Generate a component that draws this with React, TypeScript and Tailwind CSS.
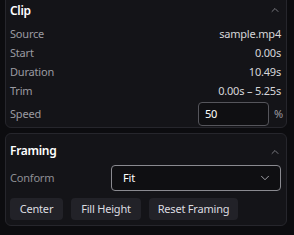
import { ChevronUp, ChevronDown } from "lucide-react";

const ROWS = [
  { label: "Source", value: "sample.mp4" },
  { label: "Start", value: "0.00s" },
  { label: "Duration", value: "10.49s" },
  { label: "Trim", value: "0.00s – 5.25s" },
];

export default function App() {
  return (
    <div
      className="h-[235px] w-[294px] overflow-hidden bg-[#0c0c0f] pl-[5px] pr-[7px] text-[11px] tracking-[-0.2px] text-[#d6d6da]"
      style={{ fontFamily: '"Noto Sans", "Open Sans", sans-serif' }}
    >
      {/* Clip */}
      <section className="mt-[-7px] rounded-md border border-[#26262c] bg-[#141418] pl-[4px] pr-[5px]">
        <div className="flex h-[31px] items-start justify-between pt-[8px]">
          <h2 className="text-[12px] font-semibold tracking-[-0.3px] text-white">Clip</h2>
          <ChevronUp className="mt-[2px] size-[12px] text-[#9a9aa0]" strokeWidth={1.5} />
        </div>
        {ROWS.map((r) => (
          <div key={r.label} className="flex h-[19px] items-center justify-between">
            <span className="text-[#9b9ba1]">{r.label}</span>
            <span>{r.value}</span>
          </div>
        ))}
        <div className="flex h-[26px] items-center justify-between">
          <span className="text-[#9b9ba1]">Speed</span>
          <div className="flex items-center">
            <div className="flex h-[24px] w-[71px] items-center rounded-[4px] border border-[#55555b] bg-[#0f0f12] px-[6px] text-white">
              50
            </div>
            <span className="ml-[5px] w-[7px] text-[#9b9ba1]">%</span>
          </div>
        </div>
      </section>

      {/* Framing */}
      <section className="mt-[5px] rounded-md border border-[#26262c] bg-[#141418] pb-[5px] pl-[4px] pr-[5px]">
        <div className="flex h-[28px] items-end justify-between pb-[2px]">
          <h2 className="text-[12px] font-semibold tracking-[-0.3px] text-white">Framing</h2>
          <ChevronUp className="mb-[2px] size-[12px] text-[#9a9aa0]" strokeWidth={1.5} />
        </div>
        <div className="mt-[3px] flex h-[26px] items-center justify-between">
          <span className="text-[#8e8e94]">Conform</span>
          <div className="flex h-[26px] w-[170px] items-center justify-between rounded-[4px] border-[1.5px] border-[#8a8a90] bg-[#0f0f12] pl-[11px] pr-[8px] text-white">
            Fit
            <ChevronDown className="size-[14px] text-[#b4b4ba]" strokeWidth={1.5} />
          </div>
        </div>
        <div className="mt-[7px] flex gap-[8px]">
          {[
            { label: "Center", w: "w-[53px]" },
            { label: "Fill Height", w: "w-[70px]" },
            { label: "Reset Framing", w: "w-[89px]" },
          ].map((b) => (
            <button
              key={b.label}
              type="button"
              className={`h-[22px] rounded-[4px] bg-[#222228] text-[11px] text-[#dcdce0] ${b.w}`}
            >
              {b.label}
            </button>
          ))}
        </div>
      </section>
    </div>
  );
}
